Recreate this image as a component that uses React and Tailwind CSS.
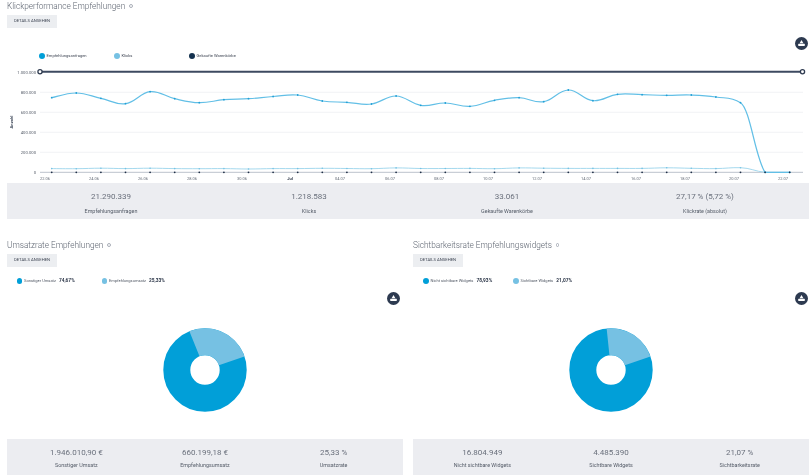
import React from "react";

const REQ = [97.7,93,98.3,103.7,91.7,98.7,102.7,99.7,98.7,96.5,95,101,102.3,104,96,105.3,103,106.3,100.3,97.7,101.7,90,100.7,94.3,94.7,95.3,95,97,102.7,172.3,172.3];
const CLK = [168.6,168.7,168.2,168.6,168.2,168.6,168.7,168.6,169,168.6,168.6,168.3,168.5,168.7,167.9,168.5,168.5,168.4,168.7,167.9,168.2,168.4,168.4,168.4,168.4,167.8,168.3,168.6,167.7,172.3,172.3];
const xAt = (i) => 51.7 + i * 24.6;

function spline(ys) {
  const p = ys.map((y, i) => [xAt(i), y]);
  const lim = (v) => Math.min(v, 172.3);
  let d = `M${p[0][0]} ${p[0][1]}`;
  for (let i = 0; i < p.length - 1; i++) {
    const a = p[Math.max(i - 1, 0)], b = p[i], c = p[i + 1], e = p[Math.min(i + 2, p.length - 1)];
    const t1 = i === 28 ? 0.08 : 0.2;
    const t2 = i === 27 ? 0.08 : 0.2;
    d += ` C${b[0] + (c[0] - a[0]) * 0.2} ${lim(b[1] + (c[1] - a[1]) * t1)} ${c[0] - (e[0] - b[0]) * 0.2} ${lim(c[1] - (e[1] - b[1]) * t2)} ${c[0]} ${c[1]}`;
  }
  return d;
}

const YAXIS = [["1.000.000", 72], ["800.000", 92.3], ["600.000", 112.3], ["400.000", 132.3], ["200.000", 152.3], ["0", 172.3]];
const XAXIS = [["22.06", 45], ["24.06", 94], ["26.06", 143], ["28.06", 192], ["30.06", 242], ["Jul", 290], ["04.07", 340], ["06.07", 390], ["08.07", 439], ["10.07", 488], ["12.07", 537], ["14.07", 586], ["16.07", 636], ["18.07", 685], ["20.07", 734], ["22.07", 783]];

function Chart() {
  return (
    <svg className="block" width="802" height="121" viewBox="7 62 802 121" fontFamily="Roboto, sans-serif">
      {YAXIS.slice(1, 5).map(([, y]) => (
        <line key={y} x1="40" x2="803" y1={y} y2={y} stroke="#eeeff2" strokeWidth="0.8" />
      ))}
      <line x1="40" x2="803" y1="172.3" y2="172.3" stroke="#8d98a8" strokeWidth="0.6" />
      {YAXIS.map(([t, y]) => (
        <text key={t} x="36" y={y + 1.5} textAnchor="end" fontSize="4.2" fill="#555c68">{t}</text>
      ))}
      <text transform="translate(12.5 122) rotate(-90)" textAnchor="middle" fontSize="4.2" fontWeight="700" fill="#3c4657">Anzahl</text>
      {XAXIS.map(([t, x]) => (
        <text key={t} x={x} y="179.5" textAnchor="middle" fontSize="4" fontWeight={t === "Jul" ? 700 : 400} fill={t === "Jul" ? "#2c3648" : "#666d78"}>{t}</text>
      ))}
      <line x1="40" x2="803" y1="71.8" y2="71.8" stroke="#3d4a60" strokeWidth="2" />
      <circle cx="40" cy="71.8" r="2.1" fill="#fff" stroke="#2f3b50" strokeWidth="1.3" />
      <circle cx="802.5" cy="71.8" r="2.1" fill="#fff" stroke="#2f3b50" strokeWidth="1.3" />
      <path d={spline(CLK)} fill="none" stroke="#a5d9ee" strokeWidth="1" />
      <path d={spline(REQ)} fill="none" stroke="#62bfe6" strokeWidth="1.2" />
      {REQ.map((y, i) => <circle key={i} cx={xAt(i)} cy={y} r="0.9" fill="#22a0d6" />)}
      {CLK.map((y, i) => <circle key={i} cx={xAt(i)} cy={y} r="0.8" fill="#74c2e4" />)}
      {REQ.map((_, i) => <circle key={i} cx={xAt(i)} cy="172.3" r="0.9" fill="#1f2f47" />)}
    </svg>
  );
}

function polar(cx, cy, r, deg) {
  const a = ((deg - 90) * Math.PI) / 180;
  return [cx + r * Math.cos(a), cy + r * Math.sin(a)];
}

function Donut({ box, cx, from, to }) {
  const R = 41.7, r = 14.7;
  const [x1, y1] = polar(cx, 370, R, from);
  const [x2, y2] = polar(cx, 370, R, to);
  const [x3, y3] = polar(cx, 370, r, to);
  const [x4, y4] = polar(cx, 370, r, from);
  return (
    <svg className="block" width="396" height="152" viewBox={box}>
      <circle cx={cx} cy="370" r={(R + r) / 2} fill="none" stroke="#019fd8" strokeWidth={R - r} />
      <path d={`M${x1} ${y1} A${R} ${R} 0 0 1 ${x2} ${y2} L${x3} ${y3} A${r} ${r} 0 0 0 ${x4} ${y4} Z`} fill="#76c1e3" />
    </svg>
  );
}

function DownloadBtn({ className }) {
  return (
    <svg className={className} width="13" height="13" viewBox="0 0 13 13">
      <circle cx="6.5" cy="6.5" r="6.5" fill="#2d3a50" />
      <path d="M6.5 3 L8.4 6.2 H4.6 Z" fill="#fff" />
      <rect x="3.2" y="6.8" width="6.6" height="2.2" rx="0.4" fill="#fff" />
    </svg>
  );
}

function Title({ children }) {
  return (
    <div className="flex items-center h-3 gap-[4px] text-[8.25px] font-light text-[#5f6672] leading-3">
      <span>{children}</span>
      <span className="w-[3.5px] h-[3.5px] rounded-full border-[0.8px] border-[#a9aeb8]" />
    </div>
  );
}

function Btn() {
  return (
    <div className="mt-[3px] w-[50px] h-[13px] flex items-center justify-center bg-[#eceef1] text-[4.2px] text-[#3f4654]">DETAILS ANSEHEN</div>
  );
}

function Stats({ items, cols, className, gap }) {
  return (
    <div className={`bg-[#ecedf1] px-[5px] grid ${cols} ${className}`}>
      {items.map(([v, l]) => (
        <div key={l} className="flex flex-col items-center">
          <div className="text-[8px] leading-[10px] text-[#6a707c]">{v}</div>
          <div className={`${gap} text-[5.4px] leading-[8px] text-[#555c68]`}>{l}</div>
        </div>
      ))}
    </div>
  );
}

function PieLegend({ items }) {
  return (
    <div className="mt-2 h-3 flex items-center text-[4.05px] text-[#555c68]">
      {items.map(([c, l, p, w]) => (
        <div key={l} className={`flex items-center ${w}`}>
          <span className={`w-[5.5px] h-[5.5px] rounded-full mr-[2px] ${c}`} />
          <span className="mr-[3px]">{l}</span>
          <b className="text-[4.8px] font-bold text-[#2c3648]">{p}</b>
        </div>
      ))}
    </div>
  );
}

export default function App() {
  return (
    <div className="w-[812px] h-[475px] overflow-hidden bg-white pl-[7px] pr-[3px] blur-[0.3px]" style={{ fontFamily: "Roboto, sans-serif" }}>
      <section className="relative">
        <Title>Klickperformance Empfehlungen</Title>
        <Btn />
        <DownloadBtn className="absolute left-[787.5px] top-[37px]" />
        <div className="mt-[22px] h-3 pl-[32px] flex items-center text-[4.1px] text-[#3f4654]">
          <div className="w-[75px] flex items-center"><span className="w-[5.5px] h-[5.5px] rounded-full mr-[2px] bg-[#019fd8]" />Empfehlungsanfragen</div>
          <div className="w-[75px] flex items-center"><span className="w-[5.5px] h-[5.5px] rounded-full mr-[2px] bg-[#76c1e3]" />Klicks</div>
          <div className="flex items-center"><span className="w-[5.5px] h-[5.5px] rounded-full mr-[2px] bg-[#14324f]" />Gekaufte Warenkörbe</div>
        </div>
        <Chart />
        <Stats
          className="h-9 pt-[9px]"
          gap="mt-[4.5px]"
          cols="grid-cols-4"
          items={[["21.290.339", "Empfehlungsanfragen"], ["1.218.583", "Klicks"], ["33.061", "Gekaufte Warenkörbe"], ["27,17 % (5,72 %)", "Klickrate (absolut)"]]}
        />
      </section>
      <div className="mt-5 grid grid-cols-[396px_396px] gap-[10px]">
        <section className="relative">
          <Title>Umsatzrate Empfehlungen</Title>
          <Btn />
          <DownloadBtn className="absolute left-[379.5px] top-[52.5px]" />
          <div className="pl-[9.5px]">
            <PieLegend items={[["bg-[#019fd8]", "Sonstiger Umsatz", "74,67%", "w-[85px]"], ["bg-[#76c1e3]", "Empfehlungsumsatz", "25,33%", ""]]} />
          </div>
          <Donut box="7 287 396 152" cx={205} from={-22} to={71} />
          <Stats
            className="h-9 pt-[9px]"
            gap="mt-[3px]"
            cols="grid-cols-3"
            items={[["1.946.010,90 €", "Sonstiger Umsatz"], ["660.199,18 €", "Empfehlungsumsatz"], ["25,33 %", "Umsatzrate"]]}
          />
        </section>
        <section className="relative">
          <Title>Sichtbarkeitsrate Empfehlungswidgets</Title>
          <Btn />
          <DownloadBtn className="absolute left-[381.5px] top-[52.5px]" />
          <div className="pl-[10px]">
            <PieLegend items={[["bg-[#019fd8]", "Nicht sichtbare Widgets", "78,93%", "w-[90px]"], ["bg-[#76c1e3]", "Sichtbare Widgets", "21,07%", ""]]} />
          </div>
          <Donut box="413 287 396 152" cx={611} from={-6} to={71} />
          <Stats
            className="h-9 pt-[9px]"
            gap="mt-[3px]"
            cols="grid-cols-3"
            items={[["16.804.949", "Nicht sichtbare Widgets"], ["4.485.390", "Sichtbare Widgets"], ["21,07 %", "Sichtbarkeitsrate"]]}
          />
        </section>
      </div>
    </div>
  );
}
